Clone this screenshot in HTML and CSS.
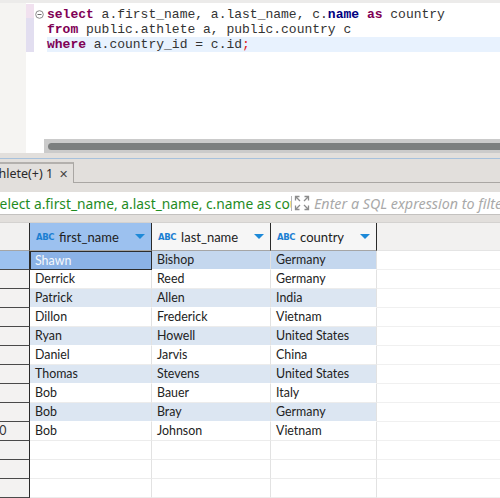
FILE: index.html
```html
<!DOCTYPE html>
<html lang="en">
<head>
    <meta charset="UTF-8">
    <title>SQL Editor</title>
    <link rel="stylesheet" href="styles.css">
</head>
<body>

<div class="editor">
    <div class="ruler"></div>
    <div class="annot">
        <div class="annot-head"></div>
        <div class="annot-body"></div>
    </div>
    <div class="folds">
        <svg width="9" height="9" viewBox="0 0 9 9"><circle cx="4.5" cy="4.5" r="3.8" fill="#fff" stroke="#8a8a8a" stroke-width="1"/><line x1="2.5" y1="4.5" x2="6.5" y2="4.5" stroke="#6a6a6a" stroke-width="1"/></svg>
    </div>
    <div class="code-area">
        <div class="code">
            <div class="line"><span class="kw">select</span> a.first_name, a.last_name, c.<span class="fn">name</span> <span class="kw">as</span> country</div>
            <div class="line"><span class="kw">from</span> public.athlete a, public.country c</div>
            <div class="line current"><span class="kw">where</span> a.country_id = c.id<span class="semi">;</span></div>
        </div>
        <div class="hscroll"><div class="thumb"></div></div>
    </div>
</div>

<div class="tabbar">
    <div class="tabline"></div>
    <div class="tabs">
        <div class="tab"><span class="tab-label">athlete(+) 1</span><span class="tab-close">&#x2715;</span></div>
        <div class="tab-rest"></div>
    </div>
</div>

<div class="filter-bar">
    <div class="filter-input">
        <span class="filter-query">select a.first_name, a.last_name, c.name as country from public.athlete a</span>
        <span class="filter-sep"></span>
        <svg class="filter-expand" width="16" height="16" viewBox="0 0 16 16" fill="none" stroke="#8c8c8c" stroke-width="1.3">
            <path d="M1.5 5.5V1.5H5.5M1.5 1.5L6 6"/>
            <path d="M10.5 1.5H14.5V5.5M14.5 1.5L10 6"/>
            <path d="M1.5 10.5V14.5H5.5M1.5 14.5L6 10"/>
            <path d="M14.5 10.5V14.5H10.5M14.5 14.5L10 10"/>
        </svg>
        <span class="filter-placeholder">Enter a SQL expression to filter results (use Ctrl+Space)</span>
    </div>
</div>

<div class="grid">
    <div class="grid-row head">
        <div class="cell num"></div>
        <div class="cell hcell sel"><span class="abc">ABC</span><span class="hname">first_name</span><span class="sort"></span></div>
        <div class="cell hcell"><span class="abc">ABC</span><span class="hname">last_name</span><span class="sort"></span></div>
        <div class="cell hcell"><span class="abc">ABC</span><span class="hname">country</span><span class="sort"></span></div>
        <div class="cell hfill"></div>
    </div>
    <div class="grid-row sel">
        <div class="cell num">1</div>
        <div class="cell data focus">Shawn</div>
        <div class="cell data">Bishop</div>
        <div class="cell data">Germany</div>
        <div class="cell fill"></div>
    </div>
    <div class="grid-row">
        <div class="cell num">2</div>
        <div class="cell data">Derrick</div>
        <div class="cell data">Reed</div>
        <div class="cell data">Germany</div>
        <div class="cell fill"></div>
    </div>
    <div class="grid-row alt">
        <div class="cell num">3</div>
        <div class="cell data">Patrick</div>
        <div class="cell data">Allen</div>
        <div class="cell data">India</div>
        <div class="cell fill"></div>
    </div>
    <div class="grid-row">
        <div class="cell num">4</div>
        <div class="cell data">Dillon</div>
        <div class="cell data">Frederick</div>
        <div class="cell data">Vietnam</div>
        <div class="cell fill"></div>
    </div>
    <div class="grid-row alt">
        <div class="cell num">5</div>
        <div class="cell data">Ryan</div>
        <div class="cell data">Howell</div>
        <div class="cell data">United States</div>
        <div class="cell fill"></div>
    </div>
    <div class="grid-row">
        <div class="cell num">6</div>
        <div class="cell data">Daniel</div>
        <div class="cell data">Jarvis</div>
        <div class="cell data">China</div>
        <div class="cell fill"></div>
    </div>
    <div class="grid-row alt">
        <div class="cell num">7</div>
        <div class="cell data">Thomas</div>
        <div class="cell data">Stevens</div>
        <div class="cell data">United States</div>
        <div class="cell fill"></div>
    </div>
    <div class="grid-row">
        <div class="cell num">8</div>
        <div class="cell data">Bob</div>
        <div class="cell data">Bauer</div>
        <div class="cell data">Italy</div>
        <div class="cell fill"></div>
    </div>
    <div class="grid-row alt">
        <div class="cell num">9</div>
        <div class="cell data">Bob</div>
        <div class="cell data">Bray</div>
        <div class="cell data">Germany</div>
        <div class="cell fill"></div>
    </div>
    <div class="grid-row">
        <div class="cell num">10</div>
        <div class="cell data">Bob</div>
        <div class="cell data">Johnson</div>
        <div class="cell data">Vietnam</div>
        <div class="cell fill"></div>
    </div>
    <div class="grid-row empty">
        <div class="cell num"></div>
        <div class="cell data"></div>
        <div class="cell data"></div>
        <div class="cell data"></div>
        <div class="cell fill"></div>
    </div>
    <div class="grid-row empty">
        <div class="cell num"></div>
        <div class="cell data"></div>
        <div class="cell data"></div>
        <div class="cell data"></div>
        <div class="cell fill"></div>
    </div>
    <div class="grid-row empty">
        <div class="cell num"></div>
        <div class="cell data"></div>
        <div class="cell data"></div>
        <div class="cell data"></div>
        <div class="cell fill"></div>
    </div>
</div>

</body>
</html>
```

FILE: styles.css
```css
html, body { margin: 0; padding: 0; }
body { width: 500px; height: 498px; overflow: hidden; background-color: #e2dfdc; font-family: "Noto Sans", sans-serif; color: #222; }

/* sql editor */
.editor { display: flex; height: 153px; background-color: #fff; border-top: 3px solid #ecebea; box-sizing: border-box; }
.ruler { width: 26px; background-color: #f5f4f2; }
.annot { width: 8px; padding-top: 1px; }
.annot-head { height: 14px; background-color: #f1e1ef; }
.annot-body { height: 34px; background-color: #e2def0; }
.folds { width: 9px; padding-top: 7px; padding-left: 1px; }
.folds svg { display: block; }
.code-area { flex: 1; display: flex; flex-direction: column; min-width: 0; }
.code { flex: 1; padding-top: 4px; font-family: "Liberation Mono", monospace; font-size: 13px; color: #333; }
.line { height: 15px; line-height: 15px; padding-left: 3px; white-space: pre; }
.line.current { background-color: #e8f2fe; margin-left: 3px; padding-left: 0; }
.kw { color: #7f0055; font-weight: bold; }
.fn { color: #000080; font-weight: bold; }
.semi { color: #e0201a; }
.hscroll { height: 14px; background-color: #cbcbcb; padding: 4px 0 3px 4px; box-sizing: border-box; }
.thumb { height: 7px; background-color: #7c7f7f; border-radius: 4px 0 0 4px; }

/* result tabs */
.tabbar { height: 33px; padding-top: 5px; box-sizing: border-box; }
.tabline { height: 1px; background-color: #a7c1dc; }
.tabs { display: flex; height: 21px; margin-top: 3px; }
.tab { width: 74px; flex: none; border-top: 2px solid #b3b0ad; border-right: 1px solid #a9a6a3; box-sizing: border-box; display: flex; align-items: center; overflow: hidden; white-space: nowrap; font-size: 12.5px; color: #2a2a2a; }
.tab-label { margin-left: -13px; }
.tab-close { margin-left: 6px; font-size: 11px; color: #444; }
.tab-rest { flex: 1; border-bottom: 1px solid #a9a6a3; }

/* filter */
.filter-bar { padding-top: 6px; height: 36px; box-sizing: border-box; }
.filter-input { display: flex; align-items: center; height: 22px; background-color: #fff; border-bottom: 1px solid #c4c2c0; overflow: hidden; white-space: nowrap; font-size: 13.8px; }
.filter-query { width: 291px; flex: none; overflow: hidden; color: #1f8c1f; text-indent: -7px; }
.filter-sep { width: 1px; height: 15px; background-color: #b5b5b5; flex: none; margin-right: 2px; }
.filter-expand { flex: none; }
.filter-placeholder { margin-left: 4px; color: #a9a9a9; font-style: italic; font-size: 14.3px; }

/* results grid */
.grid { font-family: Lato, "Noto Sans", sans-serif; font-size: 12.4px; }
.grid-row { display: grid; grid-template-columns: 30px 122px 119px 106px 1fr; height: 19px; }
.cell { box-sizing: border-box; overflow: hidden; white-space: nowrap; border-bottom: 1px solid #ececec; }
.num { background-color: #f3f2f1; border-right: 1px solid #2a2a2a; border-bottom: 1px solid #4a4a4a; text-indent: -8px; line-height: 18px; color: #333; }
.data { background-color: #fff; border-right: 1px solid #e2e2e2; padding-left: 5px; line-height: 18px; }
.fill { background-color: #fff; border-bottom-color: #f0f0f0; }
.grid-row.alt .data { background-color: #dce6f2; border-bottom-color: #fff; }
.grid-row.sel .data { background-color: #c4d7ee; border-bottom-color: #fff; }
.grid-row.sel .num { background-color: #9cc1ef; }
.grid-row.sel .data.focus { background-color: #8bb2e6; color: #f6f9fd; border: 1px solid #2c2c2c; padding-left: 4px; line-height: 17px; }

.grid-row.head { height: 28px; border-top: 1px solid #d4d2d0; }
.head .num { background-color: #f2f1f0; border-bottom: 1px solid #a5a5a5; }
.hcell { display: flex; align-items: center; background-color: #f6f6f6; border-right: 1px solid #2a2a2a; border-bottom: 1px solid #a5a5a5; padding-left: 6px; padding-right: 6px; font-size: 13px; color: #222; }
.hcell.sel { background-color: #9cc1ef; }
.hfill { background-color: #f2f1f0; border-bottom: 1px solid #e4e4e4; }
.abc { font-family: "DejaVu Sans", sans-serif; font-size: 8.5px; font-weight: bold; color: #1b7fd2; letter-spacing: -0.4px; margin-right: 5px; }
.hname { flex: 1; }
.sort { width: 0; height: 0; border-left: 5px solid transparent; border-right: 5px solid transparent; border-top: 5px solid #1d89d8; }
```
